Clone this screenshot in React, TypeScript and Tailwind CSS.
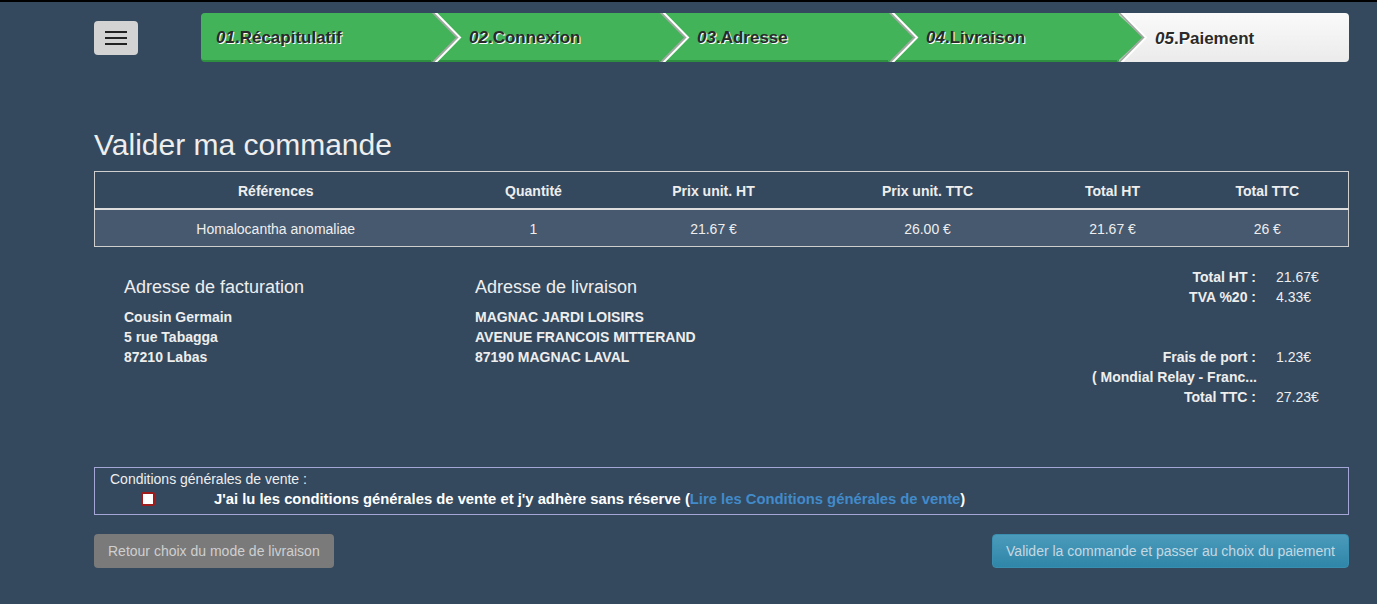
import React from "react";

type Step = { num: string; label: string; done: boolean; width: string };

const steps: Step[] = [
  { num: "01", label: ".Récapitulatif", done: true, width: "w-[232px]" },
  { num: "02", label: ".Connexion", done: true, width: "w-[228px]" },
  { num: "03", label: ".Adresse", done: true, width: "w-[229px]" },
  { num: "04", label: ".Livraison", done: true, width: "w-[229px]" },
  { num: "05", label: ".Paiement", done: false, width: "w-[230px]" },
];

const columns = [
  { title: "Références", width: "w-[362px]" },
  { title: "Quantité", width: "w-[154px]" },
  { title: "Prix unit. HT", width: "w-[206px]" },
  { title: "Prix unit. TTC", width: "w-[222px]" },
  { title: "Total HT", width: "w-[148px]" },
  { title: "Total TTC", width: "" },
];

const row = ["Homalocantha anomaliae", "1", "21.67 €", "26.00 €", "21.67 €", "26 €"];

const Chevron = () => (
  <svg
    className="absolute top-0 left-[calc(100%-2px)] z-10"
    width="32"
    height="49"
    viewBox="0 0 32 49"
  >
    <polygon points="0,0 26,24.5 0,49" fill="#43b35a" />
    <polyline points="2,-1 27,24.5 2,50" fill="none" stroke="#9ea9a0" strokeWidth="3" />
    <polyline points="4,-1 29,24.5 4,50" fill="none" stroke="#ffffff" strokeWidth="2" />
  </svg>
);

const Steps = () => (
  <div className="flex w-[1148px] h-[49px]">
    {steps.map((s, i) => (
      <div
        key={s.num}
        className={
          "relative shrink-0 flex items-center pt-[2px] text-[17px] font-bold text-[#2a2a2a] [text-shadow:1px_1px_0_#ffffff] " +
          s.width +
          " " +
          (s.done
            ? "bg-[#43b35a] border-b-2 border-[#2f8f40] "
            : "bg-gradient-to-b from-[#fafafa] to-[#ebebeb] rounded-r-[4px] ") +
          (i === 0 ? "rounded-l-[4px] pl-[15px]" : "pl-[36px]")
        }
      >
        <span>
          <i>{s.num}</i>
          {s.label}
        </span>
        {s.done && <Chevron />}
      </div>
    ))}
  </div>
);

const Totals = () => {
  const lines: { label: string; value: string; gapBefore?: boolean }[] = [
    { label: "Total HT :", value: "21.67€" },
    { label: "TVA %20 :", value: "4.33€" },
    { label: "Frais de port :", value: "1.23€", gapBefore: true },
    { label: "( Mondial Relay - Franc...", value: "" },
    { label: "Total TTC :", value: "27.23€" },
  ];
  return (
    <div className="ml-auto mr-[19px] flex flex-col">
      {lines.map((l) => (
        <div key={l.label} className={"flex h-5 items-center " + (l.gapBefore ? "mt-10" : "")}>
          <div className="w-[164px] text-right font-bold whitespace-nowrap">{l.label}</div>
          <div className="w-[54px] ml-5">{l.value}</div>
        </div>
      ))}
    </div>
  );
};

export default function App() {
  return (
    <div
      className="min-h-screen bg-[#34495e] border-t-2 border-black text-[#eeeeee] text-[14px]"
      style={{ fontFamily: '"Liberation Sans", Arial, sans-serif' }}
    >
      <div className="ml-[94px] w-[1255px] pt-[11px]">
        <div className="flex items-center">
          <button className="w-[44px] h-[34px] bg-[#d3d3d3] rounded-[4px] flex flex-col items-center justify-center gap-[4px]">
            <span className="block w-[22px] h-[2px] bg-[#222]" />
            <span className="block w-[22px] h-[2px] bg-[#222]" />
            <span className="block w-[22px] h-[2px] bg-[#222]" />
          </button>
          <div className="ml-[63px]">
            <Steps />
          </div>
        </div>

        <h1 className="mt-[66px] text-[30px] leading-[33px] text-[#eeeeee]">Valider ma commande</h1>

        <table className="mt-[10px] w-full border border-[#cfcfcf] border-collapse">
          <thead>
            <tr className="h-[37px] border-b-2 border-[#dddddd]">
              {columns.map((c) => (
                <th key={c.title} className={"pt-[3px] font-bold text-center " + c.width}>
                  {c.title}
                </th>
              ))}
            </tr>
          </thead>
          <tbody>
            <tr className="h-[38px] bg-[#46596e]">
              {row.map((v, i) => (
                <td key={i} className="pt-[3px] text-center">
                  {v}
                </td>
              ))}
            </tr>
          </tbody>
        </table>

        <div className="mt-[20px] flex">
          <div className="ml-[30px] w-[351px] pt-[10px]">
            <h3 className="text-[18px] leading-5">Adresse de facturation</h3>
            <div className="mt-[10px] font-bold leading-5">
              <div>Cousin Germain</div>
              <div>5 rue Tabagga</div>
              <div>87210 Labas</div>
            </div>
          </div>
          <div className="w-[300px] pt-[10px]">
            <h3 className="text-[18px] leading-5">Adresse de livraison</h3>
            <div className="mt-[10px] font-bold leading-5">
              <div>MAGNAC JARDI LOISIRS</div>
              <div>AVENUE FRANCOIS MITTERAND</div>
              <div>87190 MAGNAC LAVAL</div>
            </div>
          </div>
          <Totals />
        </div>

        <div className="mt-[60px] border border-[#a4a6d8] h-[48px] pl-[15px] pt-[1px]">
          <div className="leading-5">Conditions générales de vente :</div>
          <div className="flex items-center h-5">
            <span className="ml-[31px] w-[14px] h-[14px] bg-white border-2 border-[#a01c1c] rounded-[2px]" />
            <span className="ml-[59px] font-bold text-white text-[14.8px]">
              J'ai lu les conditions générales de vente et j'y adhère sans réserve (
              <a className="text-[#428bca]">Lire les Conditions générales de vente</a>)
            </span>
          </div>
        </div>

        <div className="mt-[19px] flex justify-between">
          <button className="h-[34px] px-[14px] rounded-[4px] bg-[#7a7a7a] text-[#cfcfcf] text-[14px]">
            Retour choix du mode de livraison
          </button>
          <button className="h-[34px] px-[13px] rounded-[4px] bg-gradient-to-b from-[#4b9bbb] to-[#2e86a8] border border-[#3a8fb0] text-[#c4d8e2] text-[14px]">
            Valider la commande et passer au choix du paiement
          </button>
        </div>
      </div>
    </div>
  );
}
